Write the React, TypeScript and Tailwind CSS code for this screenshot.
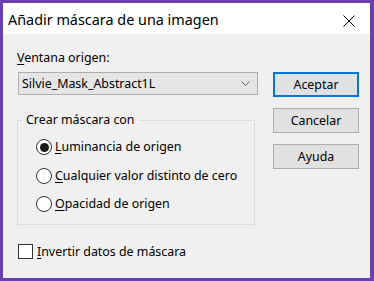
import { ReactNode } from 'react';

const font = { fontFamily: '"Noto Sans", "Open Sans", sans-serif' };

const Key = ({ children }: { children: ReactNode }) => <span className="underline underline-offset-2">{children}</span>;

const Radio = ({ checked, children }: { checked?: boolean; children: ReactNode }) => (
  <div className="flex h-[28.5px] items-center gap-[3px]">
    <span className="flex h-[16px] w-[16px] items-center justify-center rounded-full border border-[#333333] bg-white">
      {checked && <span className="h-[9px] w-[9px] rounded-full bg-[#1a1a1a]" />}
    </span>
    <span>{children}</span>
  </div>
);

const Button = ({ primary, children }: { primary?: boolean; children: ReactNode }) => (
  <button
    type="button"
    className={
      primary
        ? 'h-[25px] w-[86px] border-2 border-[#0078d7] bg-[#e1e1e1] text-[12.4px] text-black'
        : 'h-[25px] w-[86px] border border-[#adadad] bg-[#e1e1e1] text-[12.4px] text-black'
    }
  >
    {children}
  </button>
);

export default function App() {
  return (
    <div
      style={font}
      className="flex h-[281px] w-[374px] flex-col border-t-[3px] border-r-[4px] border-b-[3px] border-l-[3px] border-[#6a3fae] bg-[#f0f0f0] text-[12.4px] leading-[16px] text-black"
    >
      <div className="flex h-[31px] shrink-0 items-start justify-between bg-white pt-[7px] pl-[5px]">
        <span className="text-[14.4px] leading-[20px]">Añadir máscara de una imagen</span>
        <svg width="12" height="12" viewBox="0 0 12 12" className="mt-[5px] mr-[15px]">
          <path d="M0.5 0.5 L11.5 11.5 M11.5 0.5 L0.5 11.5" stroke="#000" strokeWidth="1" />
        </svg>
      </div>

      <div className="flex flex-1 pt-[16px] pl-[14px]">
        <div className="flex w-[241px] flex-col">
          <div>
            <Key>V</Key>entana origen:
          </div>
          <div className="mt-[6px] ml-[1px] flex h-[23px] w-[240px] items-center justify-between border border-[#adadad] bg-[#e5e5e5] pr-[7px] pl-[3px]">
            <span>Silvie_Mask_Abstract1L</span>
            <svg width="9" height="5" viewBox="0 0 9 5">
              <path d="M0.5 0.5 L4.5 4.5 L8.5 0.5" fill="none" stroke="#606060" strokeWidth="1" />
            </svg>
          </div>

          <fieldset className="mt-[17px] w-[238px] border border-[#dcdcdc] pb-[5px]">
            <legend className="ml-[5px] px-[3px]">Crear máscara con</legend>
            <div className="pt-[5px] pl-[18px]">
              <Radio checked>
                <Key>L</Key>uminancia de origen
              </Radio>
              <Radio>
                <Key>C</Key>ualquier valor distinto de cero
              </Radio>
              <Radio>
                <Key>O</Key>pacidad de origen
              </Radio>
            </div>
          </fieldset>

          <div className="mt-[19px] ml-[1px] flex items-center gap-[4px]">
            <span className="h-[15px] w-[15px] border border-[#333333] bg-white" />
            <span>
              <Key>I</Key>nvertir datos de máscara
            </span>
          </div>
        </div>

        <div className="ml-[15px] flex flex-col gap-[11px] pt-[22px]">
          <Button primary>Aceptar</Button>
          <Button>Cancelar</Button>
          <Button>Ayuda</Button>
        </div>
      </div>
    </div>
  );
}
